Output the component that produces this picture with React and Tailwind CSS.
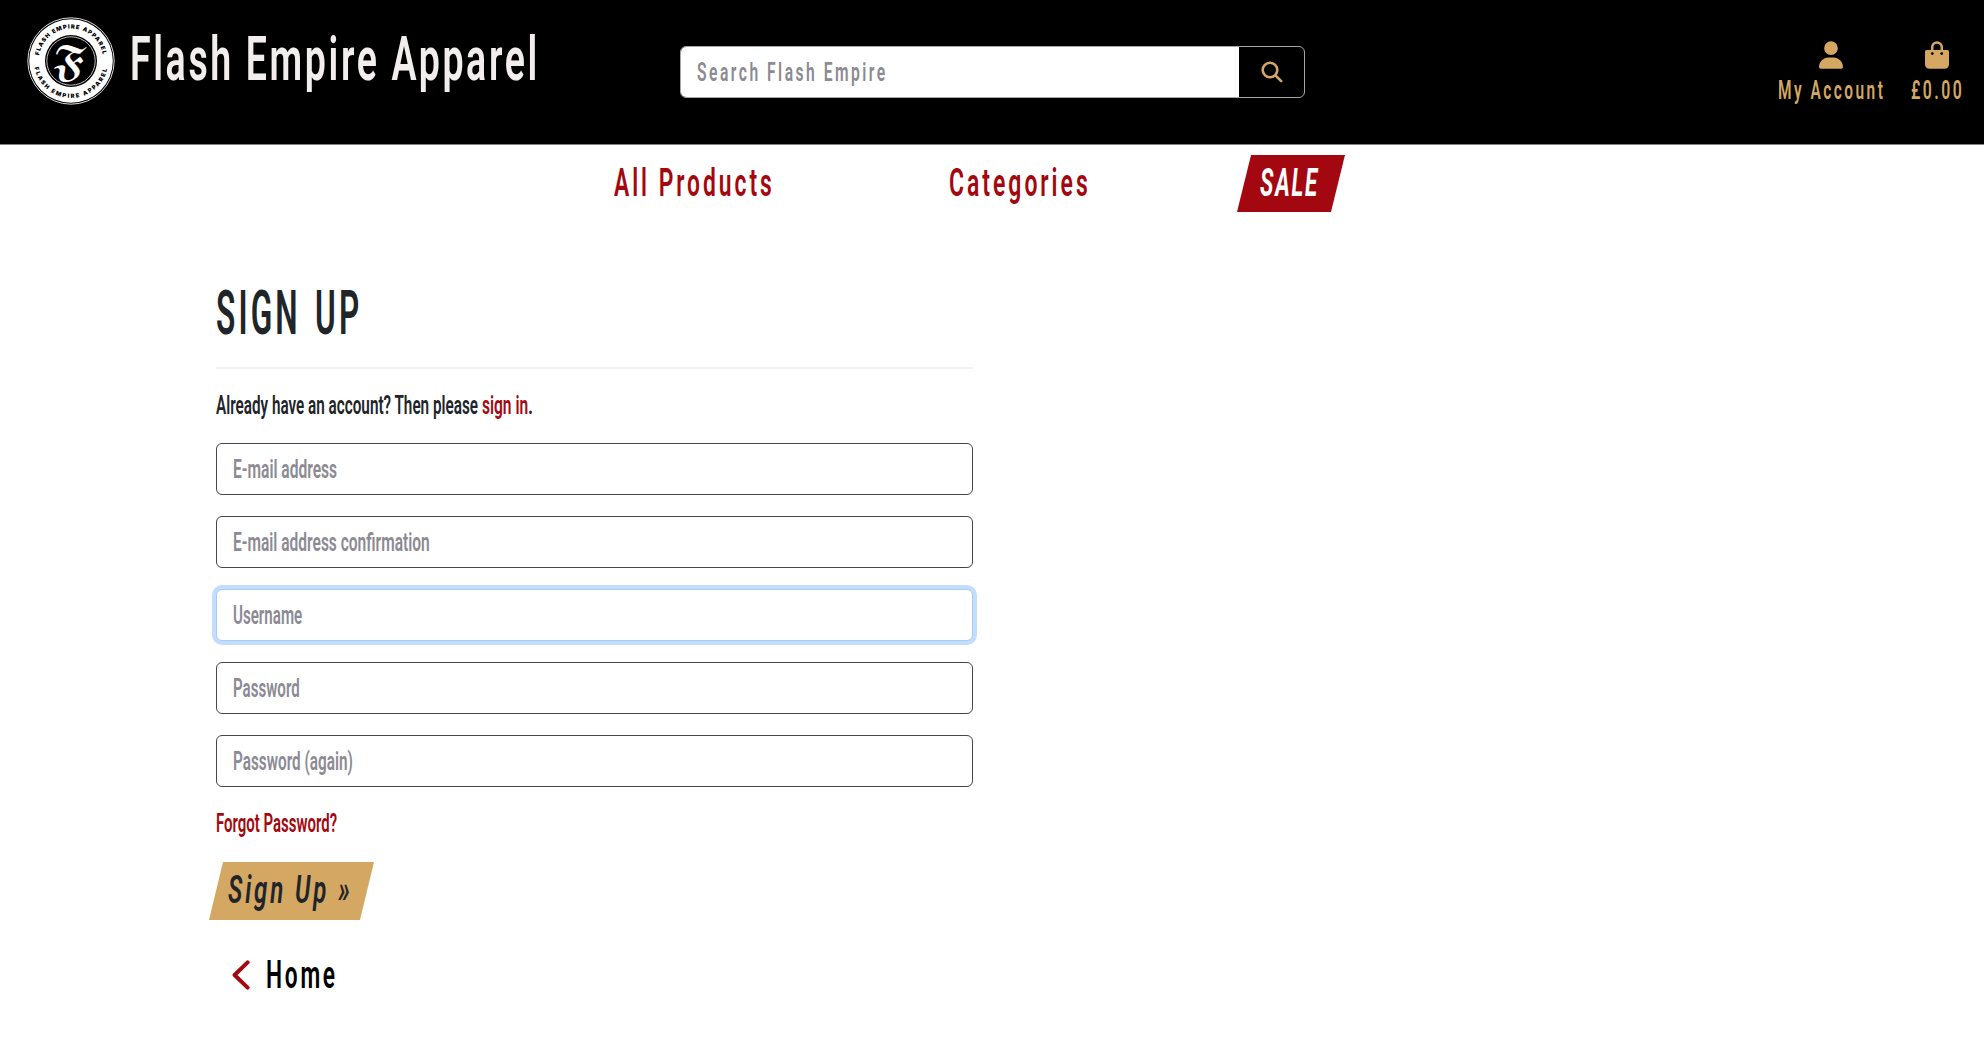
import { useLayoutEffect, useRef, useState } from "react";
import { FaUser } from "react-icons/fa6";

/* Condensed display text: squeezes the label to the width of its box. */
function Condensed({ children, className = "" }) {
  const box = useRef(null);
  const label = useRef(null);
  const [scale, setScale] = useState(1);

  useLayoutEffect(() => {
    const spacing = parseFloat(getComputedStyle(label.current).letterSpacing) || 0;
    setScale(box.current.clientWidth / (label.current.offsetWidth - spacing));
  }, [children]);

  return (
    <span ref={box} className={`block shrink-0 whitespace-nowrap ${className}`}>
      <span ref={label} className="inline-block origin-left" style={{ transform: `scaleX(${scale})` }}>
        {children}
      </span>
    </span>
  );
}

function Logo() {
  return (
    <svg viewBox="0 0 88 88" className="size-[88px] shrink-0">
      <defs>
        <path id="ring-top" d="M 11.5 44 A 32.5 32.5 0 0 1 76.5 44" />
        <path id="ring-bottom" d="M 7 44 A 37 37 0 0 0 81 44" />
      </defs>
      <circle cx="44" cy="44" r="43.2" fill="none" stroke="#d8d8d8" strokeWidth="1" />
      <circle cx="44" cy="44" r="41.8" fill="#fff" />
      <circle cx="44" cy="44" r="26" fill="#000" />
      <circle cx="44" cy="44" r="24.2" fill="none" stroke="#bbb" strokeWidth="1" />
      <g fill="#000" fontFamily="Inter, sans-serif" fontWeight="900" fontSize="5.8" textAnchor="middle">
        <text letterSpacing="1">
          <textPath href="#ring-top" startOffset="50%">FLASH EMPIRE APPAREL</textPath>
        </text>
        <text letterSpacing="1.6">
          <textPath href="#ring-bottom" startOffset="50%">FLASH EMPIRE APPAREL</textPath>
        </text>
      </g>
      <text x="43.5" y="57.5" textAnchor="middle" fill="#fff" fontSize="40" fontFamily="'DejaVu Math TeX Gyre', 'DejaVu Sans', serif">
        𝕱
      </text>
    </svg>
  );
}

function SearchIcon() {
  return (
    <svg viewBox="0 0 22 22" className="size-[22px]" fill="none" stroke="#d4a762" strokeWidth="2.6" strokeLinecap="round">
      <circle cx="9" cy="9" r="7.3" />
      <path d="M14.4 14.4 L20.2 20.2" />
    </svg>
  );
}

function BagIcon() {
  return (
    <svg viewBox="0 0 24 28" className="h-7 w-6">
      <path d="M7.2 11 V6.2 A4.8 4.8 0 0 1 16.8 6.2 V11" fill="none" stroke="#d4a762" strokeWidth="2.5" />
      <path d="M1.6 9 H22.4 Q24 9 24 10.6 V23 Q24 27.7 19.2 27.7 H4.8 Q0 27.7 0 23 V10.6 Q0 9 1.6 9 Z" fill="#d4a762" />
      <circle cx="7.3" cy="12.6" r="1.4" fill="#000" />
      <circle cx="16.7" cy="12.6" r="1.4" fill="#000" />
    </svg>
  );
}

function ChevronIcon() {
  return (
    <svg viewBox="0 0 18 30" className="h-[30px] w-[18px]" fill="none" stroke="#a30810" strokeWidth="4" strokeLinecap="round" strokeLinejoin="round">
      <path d="M15.6 2.4 L2.6 15 L15.6 27.6" />
    </svg>
  );
}

function Field({ label, width, focused, type = "text" }) {
  return (
    <label
      className={`relative flex h-[52px] items-center rounded-md border bg-white pt-px pl-4 ${
        focused ? "border-[#a3ccfb] ring-4 ring-[#c3ddfe]" : "border-[#45454a]"
      }`}
    >
      <input type={type} aria-label={label} className="absolute inset-0 size-full bg-transparent px-4 outline-none" />
      <Condensed className={`text-[25px] leading-[49px] font-semibold text-[#8c8a93] ${width}`}>{label}</Condensed>
    </label>
  );
}

export default function App() {
  return (
    <div className="min-h-[1062px] bg-white font-[Roboto,sans-serif] text-[#212529]">
      <header className="flex h-[145px] items-start border-b border-[#808080] bg-black">
        <a className="flex pt-[17px] pl-[27px]">
          <Logo />
          <Condensed className="ml-[15px] w-[407px] text-[62px] leading-[83px] font-semibold tracking-[0.07em] text-[#f3eeee]">
            Flash Empire Apparel
          </Condensed>
        </a>

        <form className="mt-[46px] ml-[143px] flex h-[52px] w-[625px] overflow-hidden rounded-md border border-[#a5a5a5] bg-black">
          <label className="relative flex w-[558px] items-center bg-white pl-[16px]">
            <input type="text" aria-label="Search Flash Empire" className="absolute inset-0 size-full bg-transparent px-4 outline-none" />
            <Condensed className="w-[188px] pt-px text-[25px] leading-[49px] font-semibold tracking-[0.16em] text-[#8c8a93]">
              Search Flash Empire
            </Condensed>
          </label>
          <button type="button" aria-label="Search" className="flex flex-1 items-center justify-center">
            <SearchIcon />
          </button>
        </form>

        <nav className="mt-[41px] ml-auto flex gap-7 pr-[22px] text-[25px] leading-[26px] font-semibold tracking-[0.16em] text-[#d4a762]">
          <a className="flex flex-col items-center">
            <FaUser className="h-7 w-6" />
            <Condensed className="mt-[9px] w-[105px]">My Account</Condensed>
          </a>
          <a className="flex flex-col items-center">
            <BagIcon />
            <Condensed className="mt-[9px] w-[51px]">£0.00</Condensed>
          </a>
        </nav>
      </header>

      <nav className="flex h-[67px] items-start pt-[10px] pl-[614px] text-[38px] leading-[56px] font-semibold text-[#a30810]">
        <Condensed className="w-[158px] tracking-[0.13em]">All Products</Condensed>
        <Condensed className="ml-[177px] w-[139px] tracking-[0.13em]">Categories</Condensed>
        <a className="ml-[149px] flex h-[57px] w-[108px] bg-[#a30810] pl-[23px] font-bold text-white [clip-path:polygon(13%_0,100%_0,87%_100%,0_100%)]">
          <Condensed className="w-[57px] tracking-[0.08em] italic">SALE</Condensed>
        </a>
      </nav>

      <main className="ml-[216px] flex w-[757px] flex-col pt-[62px]">
        <Condensed className="w-[143px] text-[62px] leading-[78px] font-semibold tracking-[0.1em] [word-spacing:0.1em]">SIGN UP</Condensed>
        <hr className="mt-[15px] border-t-2 border-[#f1f1f1]" />

        <p className="mt-[22px] flex h-[28px] text-[25px] leading-[29px] font-semibold">
          <Condensed className="w-[262px]">Already have an account? Then please</Condensed>
          <Condensed className="ml-[4px] w-[46px] text-[#a30810]">sign in</Condensed>
          <Condensed className="w-[5px]">.</Condensed>
        </p>

        <form className="mt-[24px] flex flex-col gap-[21px]">
          <Field label="E-mail address" width="w-[104px]" type="email" />
          <Field label="E-mail address confirmation" width="w-[197px]" type="email" />
          <Field label="Username" width="w-[69px]" focused />
          <Field label="Password" width="w-[67px]" type="password" />
          <Field label="Password (again)" width="w-[120px]" type="password" />
        </form>

        <Condensed className="mt-[23px] w-[121px] text-[25px] leading-[28px] font-semibold text-[#a30810]">
          Forgot Password?
        </Condensed>

        <button
          type="button"
          className="mt-[24px] -ml-[7px] flex h-[58px] w-[165px] bg-[#d4a762] pl-[19px] text-left text-[38px] leading-[57px] font-semibold italic [clip-path:polygon(8.5%_0,100%_0,91.5%_100%,0_100%)]"
        >
          <Condensed className="w-[122px] tracking-[0.12em]">Sign Up »</Condensed>
        </button>

        <a className="mt-[33px] ml-[16px] flex items-center text-black">
          <ChevronIcon />
          <Condensed className="ml-[16px] w-[69px] text-[38px] leading-[44px] font-semibold tracking-[0.12em]">Home</Condensed>
        </a>
      </main>
    </div>
  );
}
